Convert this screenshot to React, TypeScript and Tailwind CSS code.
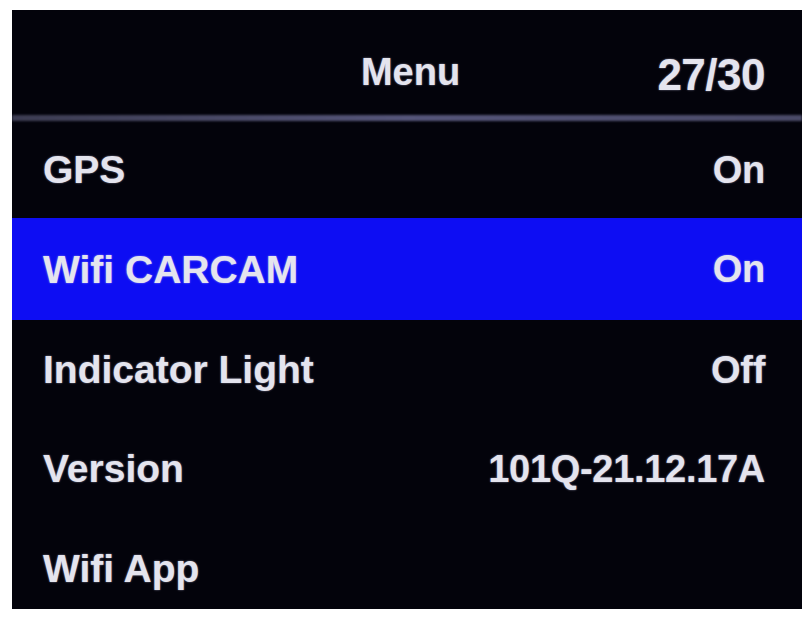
const rows = [
  { label: "GPS", value: "On", h: "h-[97px]" },
  { label: "Wifi CARCAM", value: "On", h: "h-[102px]", active: true },
  { label: "Indicator Light", value: "Off", h: "h-[99px]" },
  { label: "Version", value: "101Q-21.12.17A", h: "h-[99px]" },
  { label: "Wifi App", value: "", h: "h-[100px]" },
];

export default function App() {
  return (
    <div className="h-[621px] w-[811px] bg-white pl-[12px] pt-[10px] font-['Liberation_Sans',Arial,sans-serif]">
      <div className="flex h-[599px] w-[790px] flex-col overflow-hidden bg-[#03030b] text-[#e4e4ee] [text-shadow:0_0_2px_rgba(220,220,255,0.6)]">
        <header className="grid h-[105px] shrink-0 grid-cols-[1fr_auto_1fr] items-start pt-[43px] pr-[37px]">
          <span />
          <span className="ml-[44px] text-[38px] font-bold leading-none">Menu</span>
          <span className="justify-self-end text-[44px] font-bold leading-none tracking-[-0.5px]">27/30</span>
        </header>
        <div className="h-[6px] shrink-0 bg-gradient-to-r from-[#3c3c52] via-[#55557a] to-[#4a4a68] blur-[1px]" />
        {rows.map((r) => (
          <div
            key={r.label}
            className={`flex ${r.h} shrink-0 items-center justify-between pl-[31px] pr-[37px] ${r.active ? "bg-[#0d0df3]" : ""}`}
          >
            <span className="text-[39px] font-bold leading-none">{r.label}</span>
            <span className="text-[38px] font-bold leading-none tracking-[-0.3px]">{r.value}</span>
          </div>
        ))}
      </div>
    </div>
  );
}
